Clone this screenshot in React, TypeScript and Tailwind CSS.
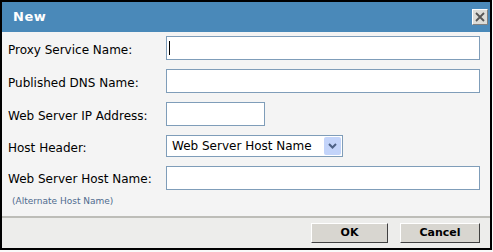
import { useState } from "react";

const font = { fontFamily: '"DejaVu Sans", Verdana, sans-serif' };

function Campo({ ancho = "w-[314px]", foco = false }: { ancho?: string; foco?: boolean }) {
  return (
    <div className={`${ancho} relative h-[24px] border border-[#7f9db9] bg-white`}>
      {foco && <span className="absolute left-[2px] top-[4px] h-[14px] w-px bg-black" />}
    </div>
  );
}

export default function App() {
  const [host] = useState("Web Server Host Name");

  return (
    <div className="h-[252px] w-[493px] bg-[#fafafa]" style={font}>
      <div className="flex h-[250px] w-[492px] flex-col border-2 border-black">
        {/* barra de titulo */}
        <div className="flex h-[30px] items-center justify-between bg-[#4a89b9] pl-[11px] pr-[2px]">
          <span className="text-[13px] font-bold tracking-[0.5px] text-white">New</span>
          <button className="flex h-[16px] w-[16px] items-center justify-center border border-t-white border-l-white border-b-[#808080] border-r-[#808080] bg-[#dcdcd8]">
            <svg width="10" height="10" viewBox="0 0 10 10">
              <path d="M1 1 L9 9 M9 1 L1 9" stroke="#555" strokeWidth="1.8" />
            </svg>
          </button>
        </div>

        {/* cuerpo */}
        <div className="flex flex-1 flex-col bg-[#f4f4f4] pl-[6px] pt-[4px] text-[12px] text-black">
          <div className="flex h-[33px] items-start">
            <label className="w-[158px] pt-[5px]">Proxy Service Name:</label>
            <Campo foco />
          </div>
          <div className="flex h-[33px] items-start">
            <label className="w-[158px] pt-[5px]">Published DNS Name:</label>
            <Campo />
          </div>
          <div className="flex h-[33px] items-start">
            <label className="w-[158px] pt-[5px]">Web Server IP Address:</label>
            <Campo ancho="w-[99px]" />
          </div>
          <div className="flex h-[31px] items-start">
            <label className="w-[158px] pt-[4px]">Host Header:</label>
            <div className="flex h-[22px] w-[177px] items-center justify-between border border-[#7f9db9] bg-white pl-[5px] pr-[1px]">
              <span>{host}</span>
              <span className="flex h-[18px] w-[17px] items-center justify-center rounded-[2px] bg-[#c3d4fa]">
                <svg width="9" height="6" viewBox="0 0 9 6">
                  <path d="M1 1 L4.5 4.5 L8 1" stroke="#4d6185" strokeWidth="2" fill="none" />
                </svg>
              </span>
            </div>
          </div>
          <div className="flex items-start">
            <div className="w-[158px] pt-[4px]">
              <div>Web Server Host Name:</div>
              <div className="pl-[4px] pt-[7px] text-[9px] text-[#4f6b8e]">(Alternate Host Name)</div>
            </div>
            <Campo />
          </div>
        </div>

        {/* pie */}
        <div className="flex h-[32px] items-start justify-end gap-[12px] border-t-2 border-[#bdbdb8] bg-[#ededeb] pr-[10px] pt-[5px]">
          <button className="h-[20px] w-[77px] border border-t-white border-l-white border-b-[#404040] border-r-[#404040] bg-[#d8d6d0] text-[11px] font-bold">
            OK
          </button>
          <button className="h-[20px] w-[80px] border border-t-white border-l-white border-b-[#404040] border-r-[#404040] bg-[#d8d6d0] text-[11px] font-bold">
            Cancel
          </button>
        </div>
      </div>
    </div>
  );
}
